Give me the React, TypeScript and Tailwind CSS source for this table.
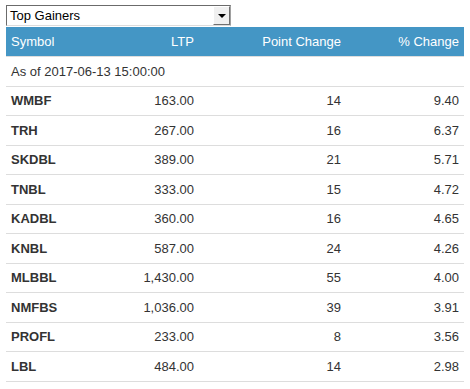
import React from "react";

const rows = [
  ["WMBF", "163.00", "14", "9.40"],
  ["TRH", "267.00", "16", "6.37"],
  ["SKDBL", "389.00", "21", "5.71"],
  ["TNBL", "333.00", "15", "4.72"],
  ["KADBL", "360.00", "16", "4.65"],
  ["KNBL", "587.00", "24", "4.26"],
  ["MLBBL", "1,430.00", "55", "4.00"],
  ["NMFBS", "1,036.00", "39", "3.91"],
  ["PROFL", "233.00", "8", "3.56"],
  ["LBL", "484.00", "14", "2.98"],
];

export default function App() {
  return (
    <div
      className="w-[470px] h-[389px] bg-white pl-[6px] pt-[5px] text-[13px] text-[#333]"
      style={{ fontFamily: '"Liberation Sans", Arial, sans-serif' }}
    >
      <div className="w-[225px] h-[21px] flex border border-t-[#6b6b6b] border-l-[#6b6b6b] border-r-[#a0a0a0] border-b-[#dcdcdc] bg-white">
        <div className="flex-1 flex items-center pl-[3px] text-black text-[13px] leading-none">Top Gainers</div>
        <div className="w-[17px] h-full flex items-center justify-center bg-[#f0f0f0] border border-t-[#fff] border-l-[#fff] border-r-[#707070] border-b-[#707070]">
          <div className="w-0 h-0 border-l-[4px] border-r-[4px] border-t-[4px] border-l-transparent border-r-transparent border-t-black" />
        </div>
      </div>
      <div className="w-[458px] mt-[1px]">
        <div className="grid grid-cols-[97px_96px_147px_118px] h-[30px] bg-[#4496c5] text-white border-b border-[#dddddd] items-center">
          <div className="pl-[5px]">Symbol</div>
          <div className="text-right pr-[5px]">LTP</div>
          <div className="text-right pr-[5px]">Point Change</div>
          <div className="text-right pr-[5px]">% Change</div>
        </div>
        <div className="h-[29.5px] flex items-center pl-[5px] border-b border-[#dddddd]">
          As of 2017-06-13 15:00:00
        </div>
        {rows.map((r) => (
          <div
            key={r[0]}
            className="grid grid-cols-[97px_96px_147px_118px] h-[29.5px] items-center border-b border-[#dddddd]"
          >
            <div className="pl-[5px] font-bold">{r[0]}</div>
            <div className="text-right pr-[5px]">{r[1]}</div>
            <div className="text-right pr-[5px]">{r[2]}</div>
            <div className="text-right pr-[5px]">{r[3]}</div>
          </div>
        ))}
      </div>
    </div>
  );
}
